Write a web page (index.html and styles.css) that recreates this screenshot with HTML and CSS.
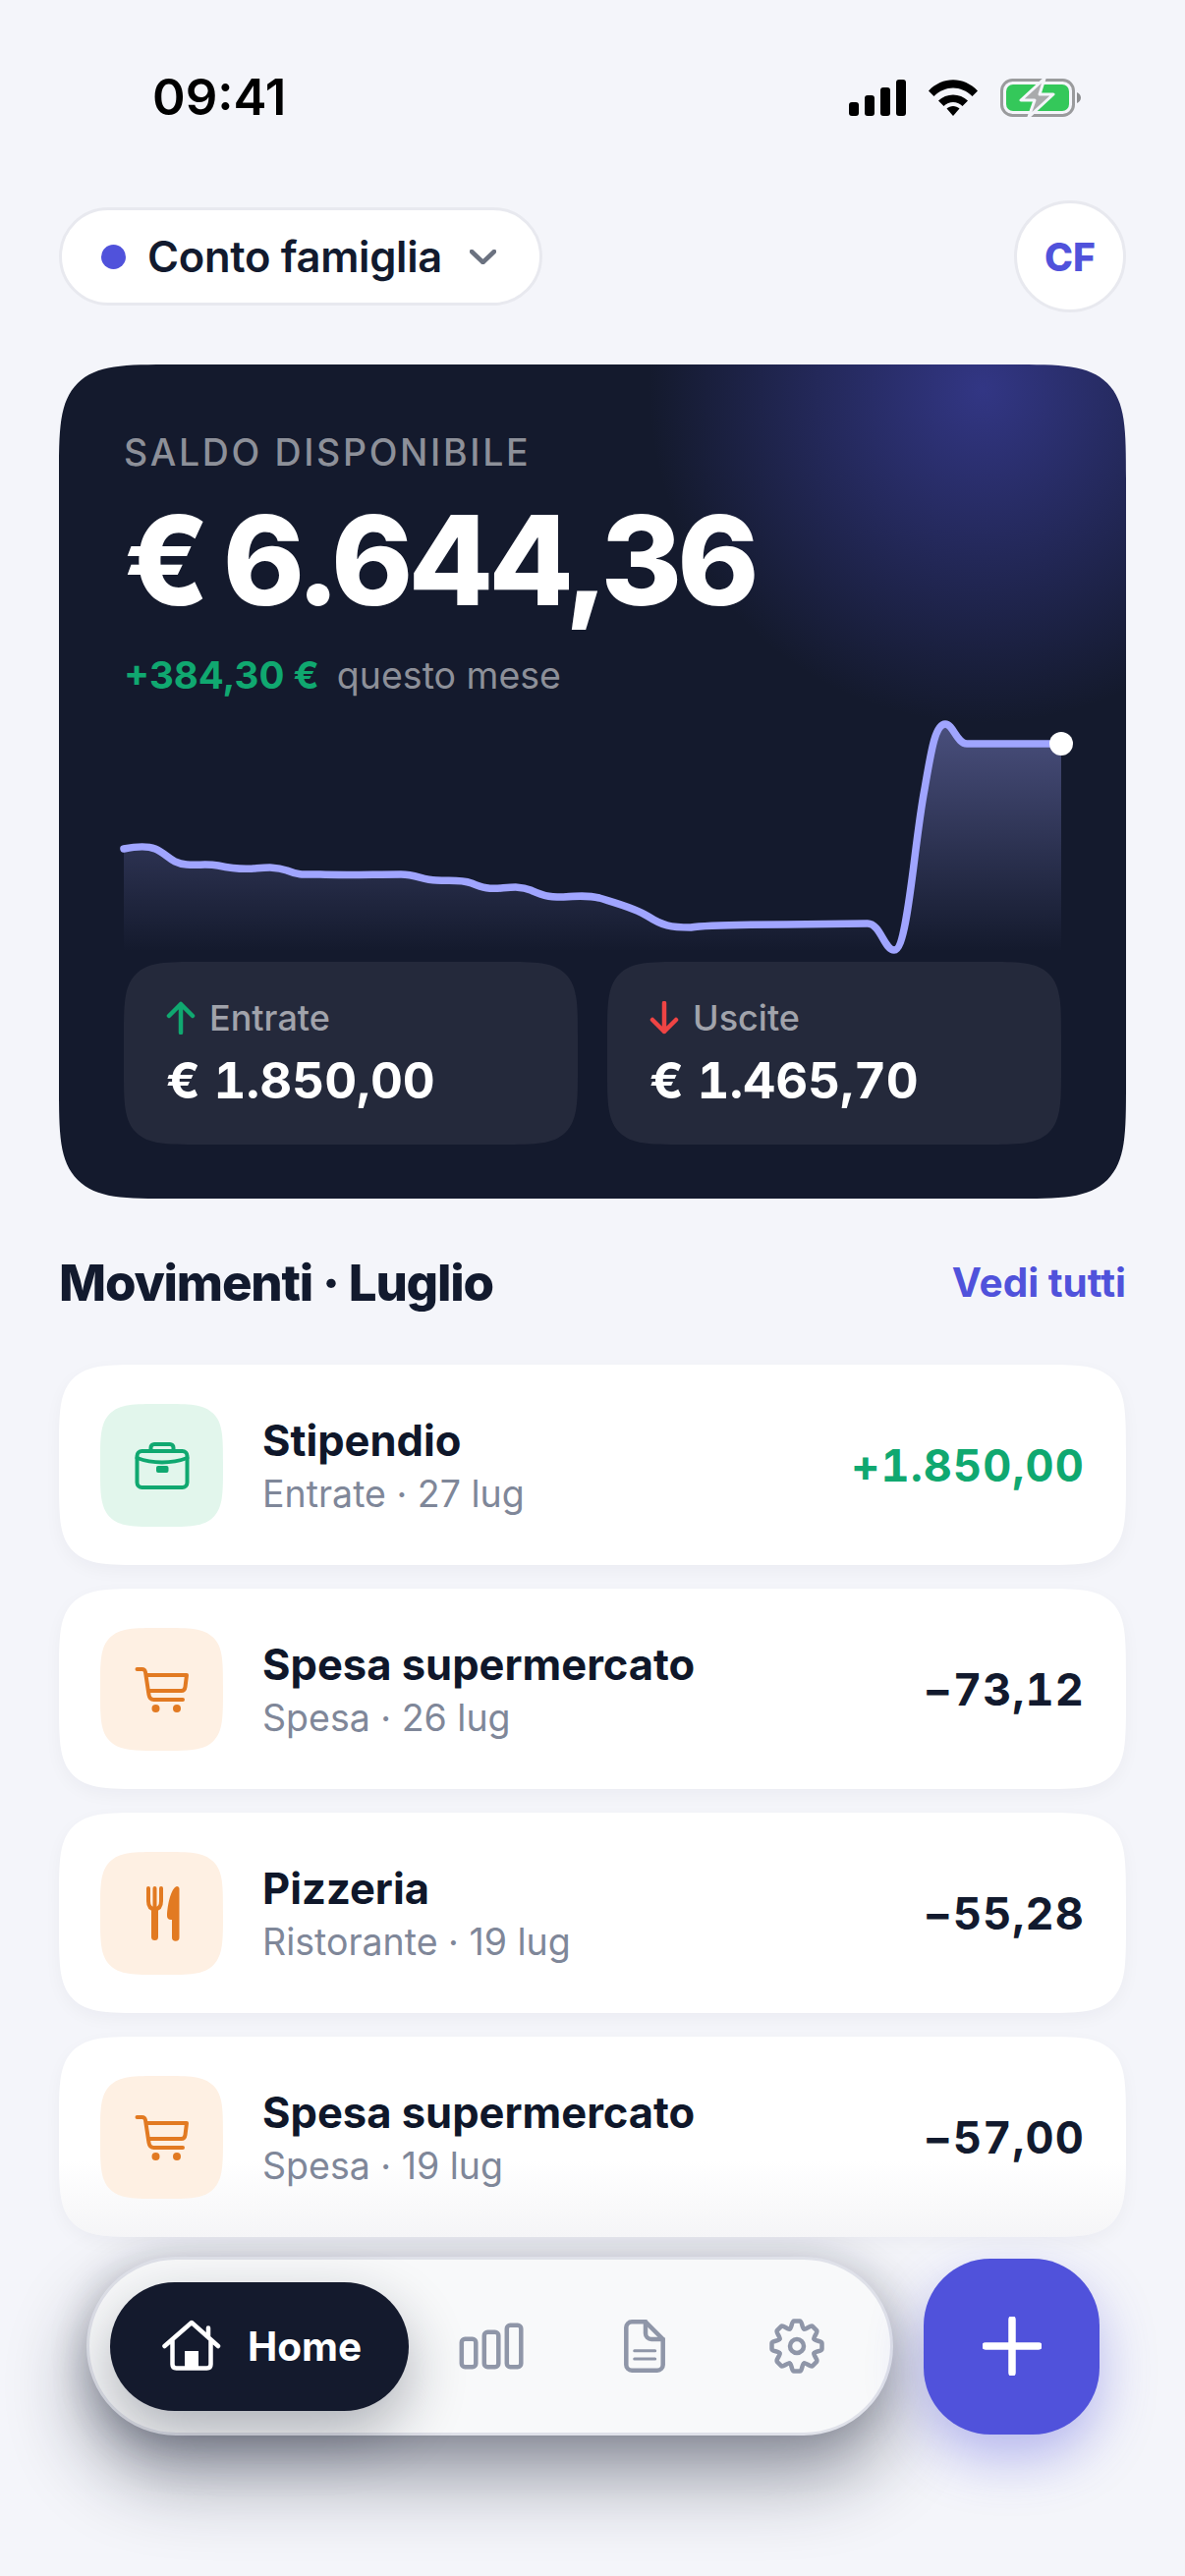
FILE: index.html
```html
<!DOCTYPE html>
<html lang="it">
<head>
    <meta charset="UTF-8">
    <meta name="viewport" content="width=device-width, initial-scale=1.0">
    <title>Conto famiglia</title>
    <link rel="stylesheet" href="styles.css">
</head>
<body>
    <div class="status-bar">
        <span class="status-time">09:41</span>
        <div class="status-icons">
            <svg class="icon-signal" width="58" height="37" viewBox="0 0 58 37">
                <rect x="0" y="23" width="10" height="14" rx="3"/>
                <rect x="16" y="16" width="10" height="21" rx="3"/>
                <rect x="32" y="8" width="10" height="29" rx="3"/>
                <rect x="48" y="0" width="10" height="37" rx="3"/>
            </svg>
            <svg class="icon-wifi" width="50" height="37" viewBox="0 0 50 37">
                <path d="M0 11.5C14-3.5 36-3.500 50 11.500L44.500 17C33 5.500 17 5.500 5.500 17Z"/>
                <path d="M10 21.500C18 13.500 32 13.500 40 21.500L34.500 27C29 21.500 21 21.500 15.500 27Z"/>
                <path d="M18.500 29.500C22 26 28 26 31.500 29.500L25 37Z"/>
            </svg>
            <svg class="icon-battery" width="82" height="39" viewBox="0 0 82 39">
                <rect x="1.500" y="1.500" width="73" height="36" rx="11" fill="none" stroke="#9a9b9d" stroke-width="3"/>
                <rect x="6" y="6" width="64" height="27" rx="7" fill="#34c85a"/>
                <path d="M78 14c2.500 1 4 3 4 5.500s-1.500 4.500-4 5.500z" fill="#8d8e90"/>
                <path d="M45 0 21 22h14l-6 17 25-23H40z" fill="#a9aaac" stroke="#f4f5fa" stroke-width="3" stroke-linejoin="round"/>
            </svg>
        </div>
    </div>

    <header class="top-row">
        <div class="account-pill">
            <span class="account-dot"></span>
            <span class="account-name">Conto famiglia</span>
            <svg class="account-chevron" width="27" height="15" viewBox="0 0 27 15"><path d="M2 2l11.500 11L25 2"/></svg>
        </div>
        <div class="avatar">CF</div>
    </header>

    <section class="balance-card">
        <div class="balance-label">SALDO DISPONIBILE</div>
        <div class="balance-amount">€ 6.644,36</div>
        <div class="balance-delta"><span class="delta-value">+384,30 €</span><span class="delta-note">questo mese</span></div>

        <svg class="balance-chart" width="954" height="250" viewBox="126 725 954 250">
            <defs>
                <linearGradient id="chartFill" gradientUnits="userSpaceOnUse" x1="0" y1="737" x2="0" y2="968">
                    <stop offset="0" stop-color="#a0a5ff" stop-opacity="0.38"/>
                    <stop offset="1" stop-color="#a0a5ff" stop-opacity="0"/>
                </linearGradient>
            </defs>
            <path fill="url(#chartFill)" d="M126 864C136 862 148 860 158 864C170 869 174 879 190 880C202 881 210 879 222 881C236 884 246 885 258 884C272 883 280 882 292 886C304 891 310 890 326 890C350 891 380 890 408 890C424 890 430 896 444 896C458 897 468 895 480 899C492 904 498 905 510 904C522 903 530 902 540 906C552 911 556 913 572 913C586 912 598 911 610 914C626 919 646 924 660 933C674 942 682 944 703 944C720 941 760 941 800 941L883 940C896 940 900 967 910 967C924 967 930 860 941 803C948 762 952 737 962 737C970 737 974 757 984 757H1080V975H126Z"/>
            <path class="chart-line" d="M126 864C136 862 148 860 158 864C170 869 174 879 190 880C202 881 210 879 222 881C236 884 246 885 258 884C272 883 280 882 292 886C304 891 310 890 326 890C350 891 380 890 408 890C424 890 430 896 444 896C458 897 468 895 480 899C492 904 498 905 510 904C522 903 530 902 540 906C552 911 556 913 572 913C586 912 598 911 610 914C626 919 646 924 660 933C674 942 682 944 703 944C720 941 760 941 800 941L883 940C896 940 900 967 910 967C924 967 930 860 941 803C948 762 952 737 962 737C970 737 974 757 984 757H1080"/>
            <circle cx="1080" cy="757" r="12" fill="#fff"/>
        </svg>

        <div class="stats">
            <div class="stat">
                <div class="stat-label">
                    <svg class="stat-arrow stat-arrow-up" width="30" height="34" viewBox="0 0 30 34"><path d="M15 32V3M3 15L15 3l12 12"/></svg>
                    Entrate
                </div>
                <div class="stat-value">€ 1.850,00</div>
            </div>
            <div class="stat">
                <div class="stat-label">
                    <svg class="stat-arrow stat-arrow-down" width="30" height="34" viewBox="0 0 30 34"><path d="M15 2v29M3 19l12 12 12-12"/></svg>
                    Uscite
                </div>
                <div class="stat-value">€ 1.465,70</div>
            </div>
        </div>
    </section>

    <div class="section-head">
        <h2 class="section-title">Movimenti · Luglio</h2>
        <span class="section-link">Vedi tutti</span>
    </div>

    <div class="movements">
        <div class="movement">
            <div class="movement-icon icon-green">
                <svg width="66" height="66" viewBox="0 0 66 66">
                    <rect x="7.500" y="19" width="51" height="37" rx="5"/>
                    <path d="M21.500 19v-3.500a3.500 3.500 0 0 1 3.500-3.500h16a3.500 3.500 0 0 1 3.500 3.500V19"/>
                    <path d="M7.500 26c16 6 35 6 51 0"/>
                    <rect class="icon-solid" x="27" y="34" width="12.500" height="7" rx="2"/>
                </svg>
            </div>
            <div class="movement-text">
                <div class="movement-title">Stipendio</div>
                <div class="movement-sub">Entrate · 27 lug</div>
            </div>
            <div class="movement-amount amount-in">+1.850,00</div>
        </div>

        <div class="movement">
            <div class="movement-icon icon-orange">
                <svg width="66" height="66" viewBox="0 0 66 66">
                    <path d="M7.500 13h5q3 0 3.500 3l3.500 23q.8 5 5 5H54"/>
                    <path d="M17 19h41l-1.500 12q-.5 4-4 4H19"/>
                    <circle class="icon-solid" cx="26.500" cy="53" r="4"/>
                    <circle class="icon-solid" cx="48" cy="53" r="4"/>
                </svg>
            </div>
            <div class="movement-text">
                <div class="movement-title">Spesa supermercato</div>
                <div class="movement-sub">Spesa · 26 lug</div>
            </div>
            <div class="movement-amount">−73,12</div>
        </div>

        <div class="movement">
            <div class="movement-icon icon-orange">
                <svg width="66" height="66" viewBox="0 0 66 66">
                    <path d="M19 8v13q0 8 6.500 8t6.500-8V8M25.500 8v20"/>
                    <rect class="icon-solid" x="22" y="27" width="7" height="34" rx="3.500"/>
                    <path class="icon-solid" d="M48 6c1.500 0 2.500 1 2.500 2.500V58a3.700 3.700 0 0 1-7.500 0V40h-1c-2.500 0-4-1.500-4-4C38.500 24 42 8 48 6z"/>
                </svg>
            </div>
            <div class="movement-text">
                <div class="movement-title">Pizzeria</div>
                <div class="movement-sub">Ristorante · 19 lug</div>
            </div>
            <div class="movement-amount">−55,28</div>
        </div>

        <div class="movement movement-last">
            <div class="movement-icon icon-orange">
                <svg width="66" height="66" viewBox="0 0 66 66">
                    <path d="M7.500 13h5q3 0 3.500 3l3.500 23q.8 5 5 5H54"/>
                    <path d="M17 19h41l-1.500 12q-.5 4-4 4H19"/>
                    <circle class="icon-solid" cx="26.500" cy="53" r="4"/>
                    <circle class="icon-solid" cx="48" cy="53" r="4"/>
                </svg>
            </div>
            <div class="movement-text">
                <div class="movement-title">Spesa supermercato</div>
                <div class="movement-sub">Spesa · 19 lug</div>
            </div>
            <div class="movement-amount">−57,00</div>
        </div>
    </div>

    <!-- barra fissa in basso -->
    <div class="bottom-bar">
        <nav class="tab-bar">
            <div class="tab-home">
                <svg class="home-icon" width="60" height="60" viewBox="0 0 60 60">
                    <path d="M2.500 30 30 6l27 24M10.500 24v24.500q0 4 4 4h31q4 0 4-4V24M47 11.500V21"/>
                    <rect class="home-door" x="23" y="35" width="14" height="18"/>
                </svg>
                <span>Home</span>
            </div>
            <div class="tab-icons">
                <svg width="66" height="66" viewBox="0 0 66 66">
                    <rect x="2.800" y="25.800" width="14.500" height="28.500" rx="3.500"/>
                    <rect x="25.800" y="18.800" width="14.500" height="35.500" rx="3.500"/>
                    <rect x="48.800" y="11.800" width="14.500" height="42.500" rx="3.500"/>
                </svg>
                <svg width="66" height="66" viewBox="0 0 66 66">
                    <path d="M20 8.300h14L51.700 26v26a5.700 5.700 0 0 1-5.700 5.700H20a5.700 5.700 0 0 1-5.700-5.700V14A5.700 5.700 0 0 1 20 8.300z"/>
                    <path d="M34 8.300V20a6 6 0 0 0 6 6h11.700"/>
                    <path class="doc-lines" d="M22.700 37.700h21M22.700 46h21"/>
                </svg>
                <svg width="66" height="66" viewBox="0 0 66 66">
                    <defs>
                        <path id="gearTooth" d="M25.700 15.500C28 14.500 27.500 7.500 30 7.500h6c2.500 0 2 7 4.300 8"/>
                    </defs>
                    <use href="#gearTooth"/>
                    <use href="#gearTooth" transform="rotate(45 33 33)"/>
                    <use href="#gearTooth" transform="rotate(90 33 33)"/>
                    <use href="#gearTooth" transform="rotate(135 33 33)"/>
                    <use href="#gearTooth" transform="rotate(180 33 33)"/>
                    <use href="#gearTooth" transform="rotate(225 33 33)"/>
                    <use href="#gearTooth" transform="rotate(270 33 33)"/>
                    <use href="#gearTooth" transform="rotate(315 33 33)"/>
                    <circle cx="33" cy="33" r="7"/>
                </svg>
            </div>
        </nav>
        <div class="fab">
            <svg width="60" height="60" viewBox="0 0 60 60"><path d="M30 3v54M3 30h54"/></svg>
        </div>
    </div>
</body>
</html>
```

FILE: styles.css
```css
* {
    box-sizing: border-box;
}

body {
    position: relative;
    width: 1206px;
    height: 2622px;
    margin: 0;
    padding: 0 60px;
    overflow: hidden;
    background-color: #f4f5fa;
    color: #121a2e;
    font-family: Inter, "Noto Sans", sans-serif;
}

/* status bar */
.status-bar {
    display: flex;
    justify-content: space-between;
    align-items: center;
    height: 204px;
    padding: 64px 46px 70px 95px;
}

.status-time {
    font-size: 51px;
    font-weight: 600;
    line-height: 60px;
    color: #000;
}

.status-icons {
    display: flex;
    align-items: center;
    gap: 23px;
}

.icon-signal,
.icon-wifi {
    fill: #000;
}

/* account row */
.top-row {
    display: flex;
    justify-content: space-between;
    align-items: center;
    height: 114px;
    margin-bottom: 53px;
}

.account-pill {
    display: flex;
    align-items: center;
    width: 492px;
    height: 100px;
    padding-left: 40px;
    background: #fff;
    border: 3px solid #e8e9ef;
    border-radius: 50px;
}

.account-dot {
    width: 25px;
    height: 25px;
    margin-right: 22px;
    border-radius: 50%;
    background: #5052db;
}

.account-name {
    font-size: 43.500px;
    font-weight: 600;
    letter-spacing: -0.3px;
}

.account-chevron {
    margin-left: 28px;
    fill: none;
    stroke: #6b7280;
    stroke-width: 4.500;
    stroke-linecap: round;
    stroke-linejoin: round;
}

.avatar {
    display: flex;
    align-items: center;
    justify-content: center;
    width: 114px;
    height: 114px;
    background: #fff;
    border: 3px solid #e8e9ef;
    border-radius: 50%;
    color: #5052db;
    font-size: 39px;
    font-weight: 800;
}

/* balance card */
.balance-card {
    height: 849px;
    padding: 66px 66px 55px;
    border-radius: 120px;
    corner-shape: squircle;
    background-color: #141a2d;
    background-image: radial-gradient(circle 340px at 940px 25px, rgba(80, 82, 219, 0.5), rgba(80, 82, 219, 0.28) 45%, rgba(80, 82, 219, 0) 100%);
    color: #fff;
}

.balance-label {
    font-size: 37.500px;
    font-weight: 500;
    line-height: 48px;
    letter-spacing: 2.650px;
    color: #8d9099;
}

.balance-amount {
    margin-top: 20px;
    font-size: 126px;
    font-weight: 800;
    line-height: 130px;
    letter-spacing: -5px;
    word-spacing: -4px;
}

.balance-delta {
    display: flex;
    align-items: baseline;
    gap: 18px;
    height: 48px;
    margin-top: 28px;
    line-height: 48px;
}

.delta-value {
    font-size: 38.500px;
    font-weight: 700;
    color: #10a870;
}

.delta-note {
    font-size: 37.500px;
    color: #8d9099;
}

.balance-chart {
    display: block;
    margin-top: 14px;
    overflow: visible;
}

.chart-line {
    fill: none;
    stroke: #a0a5ff;
    stroke-width: 7.500;
    stroke-linecap: round;
    stroke-linejoin: round;
}

.stats {
    display: grid;
    grid-template-columns: 1fr 1fr;
    gap: 30px;
    margin-top: 4px;
}

.stat {
    height: 186px;
    padding: 35px 43px 0;
    border-radius: 78px;
    corner-shape: squircle;
    background: #24293b;
}

.stat-label {
    display: flex;
    align-items: center;
    gap: 14px;
    font-size: 36px;
    font-weight: 500;
    line-height: 44px;
    color: #a1a3ab;
}

.stat-arrow {
    fill: none;
    stroke-width: 4.500;
    stroke-linecap: round;
    stroke-linejoin: round;
}

.stat-arrow-up {
    stroke: #10a870;
}

.stat-arrow-down {
    stroke: #ef4444;
}

.stat-value {
    margin-top: 12px;
    font-size: 51px;
    font-weight: 700;
    line-height: 60px;
    font-variant-numeric: tabular-nums;
    color: #fff;
}

/* movements */
.section-head {
    display: flex;
    justify-content: space-between;
    align-items: center;
    height: 60px;
    margin: 55px 0 54px;
}

.section-title {
    margin: 0;
    font-size: 51px;
    font-weight: 800;
    letter-spacing: -1.200px;
}

.section-link {
    color: #5052db;
    font-size: 40.500px;
    font-weight: 700;
}

.movements {
    position: relative;
    z-index: 2;
    display: flex;
    flex-direction: column;
    gap: 24px;
}

.movement {
    display: flex;
    align-items: center;
    gap: 40px;
    height: 204px;
    padding: 0 42px;
    border-radius: 90px;
    corner-shape: squircle;
    background: #fff;
    box-shadow: 0 6px 18px rgba(20, 26, 45, 0.04);
}

.movement-last {
    background: linear-gradient(#fff 62%, #f5f5f7 100%);
}

.movement-icon {
    display: flex;
    align-items: center;
    justify-content: center;
    flex: none;
    width: 125px;
    height: 125px;
    border-radius: 62px;
    corner-shape: squircle;
}

.movement-icon svg {
    fill: none;
    stroke: currentColor;
    stroke-width: 4;
    stroke-linecap: round;
    stroke-linejoin: round;
}

.movement-icon .icon-solid {
    fill: currentColor;
    stroke: none;
}

.icon-green {
    background: #e2f6ec;
    color: #10a870;
}

.icon-orange {
    background: #fef0e3;
    color: #e27a22;
}

.movement-text {
    flex: 1;
}

.movement-title {
    font-size: 43.500px;
    font-weight: 700;
    line-height: 54px;
    color: #0f172a;
}

.movement-sub {
    margin-top: 6px;
    font-size: 37.500px;
    line-height: 44px;
    color: #7f8799;
}

.movement-amount {
    font-size: 45px;
    font-weight: 700;
    letter-spacing: 1.100px;
    font-variant-numeric: tabular-nums;
    color: #121a2e;
}

.amount-in {
    color: #10a870;
}

/* bottom bar */
.bottom-bar {
    position: absolute;
    left: 88px;
    right: 87px;
    bottom: 143px;
    display: flex;
    align-items: center;
    gap: 31px;
}

.tab-bar {
    display: flex;
    align-items: center;
    flex: 1;
    height: 182px;
    padding: 0 21px;
    border: 3px solid #dfe1e9;
    border-radius: 91px;
    background: #f8f9fa;
    box-shadow: 0 40px 80px rgba(20, 26, 45, 0.46), 0 0 40px rgba(20, 26, 45, 0.16);
}

.tab-home {
    display: flex;
    align-items: center;
    gap: 27px;
    width: 304px;
    height: 131px;
    padding-left: 53px;
    border-radius: 65.500px;
    background: #141a2d;
    color: #fff;
    font-size: 40.500px;
    font-weight: 700;
    box-shadow: 0 24px 60px rgba(20, 26, 45, 0.32);
}

.home-icon {
    fill: none;
    stroke: #fff;
    stroke-width: 4.500;
    stroke-linecap: round;
    stroke-linejoin: round;
}

.home-icon .home-door {
    fill: #fff;
    stroke: none;
}

.tab-icons {
    display: flex;
    gap: 89.500px;
    margin-left: 51px;
}

.tab-icons svg {
    fill: none;
    stroke: #8f96a8;
    stroke-width: 4.500;
    stroke-linecap: round;
    stroke-linejoin: round;
}

.tab-icons .doc-lines {
    stroke-width: 3;
}

.fab {
    display: flex;
    align-items: center;
    justify-content: center;
    flex: none;
    width: 179px;
    height: 179px;
    border-radius: 68px;
    background: #5052db;
    box-shadow: 0 24px 54px rgba(80, 82, 219, 0.38);
}

.fab svg {
    fill: none;
    stroke: #fff;
    stroke-width: 7.500;
    stroke-linecap: round;
}
```
